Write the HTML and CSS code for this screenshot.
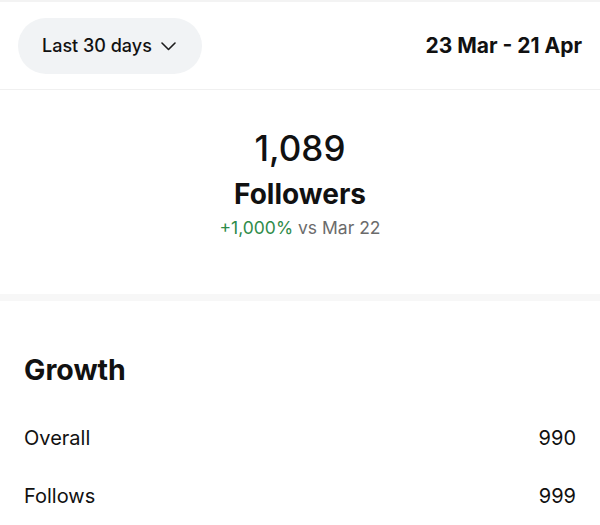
FILE: index.html
```html
<!DOCTYPE html>
<html>

<head>
	<meta charset="utf-8">
	<meta name="viewport" content="width=device-width, initial-scale=1">
	<title>Followers</title>
	<link rel="stylesheet" href="styles.css">
</head>

<body>
	<div class="header">
		<button class="range">
			Last 30 days
			<svg class="chev" width="15" height="9" viewBox="0 0 15 9">
				<path d="M1 1 L7.5 7.5 L14 1" fill="none" stroke="#1c1c1c" stroke-width="1.6" stroke-linecap="round" stroke-linejoin="round" />
			</svg>
		</button>
		<div class="dates">23 Mar - 21 Apr</div>
	</div>

	<div class="summary">
		<div class="count">1,089</div>
		<div class="label">Followers</div>
		<div class="change"><span class="up">+1,000%</span> vs Mar 22</div>
	</div>

	<div class="band"></div>

	<div class="growth">
		<h2>Growth</h2>
		<div class="row">
			<span>Overall</span>
			<span>990</span>
		</div>
		<div class="row">
			<span>Follows</span>
			<span>999</span>
		</div>
	</div>
</body>

</html>
```

FILE: styles.css
```css
body {
	margin: 0;
	background-color: white;
	color: #111;
	font-family: Inter, "Liberation Sans", sans-serif;
}

.header {
	display: flex;
	justify-content: space-between;
	align-items: center;
	height: 87px;
	padding: 0 18px;
	border-top: 2px solid #f3f3f3;
	border-bottom: 1px solid #f0f0f0;
}

.range {
	display: flex;
	align-items: center;
	gap: 9px;
	height: 56px;
	padding: 0 26px 0 24px;
	border: none;
	border-radius: 28px;
	background-color: #f1f3f5;
	color: #111;
	font-family: inherit;
	font-size: 18px;
	font-weight: 500;
}

.chev {
	margin-top: 1px;
}

.dates {
	font-size: 21px;
	font-weight: 700;
}

.summary {
	height: 204px;
	text-align: center;
}

.count {
	padding-top: 36px;
	font-size: 35px;
	font-weight: 500;
	line-height: 44px;
}

.label {
	font-size: 28px;
	font-weight: 700;
	line-height: 36px;
	margin-top: 6px;
}

.change {
	font-size: 17.5px;
	color: #6b6b6b;
	line-height: 22px;
	margin-top: 5px;
}

.up {
	color: #2e8b4a;
}

.band {
	height: 7px;
	background-color: #f7f7f7;
}

.growth {
	padding: 0 24px;
}

.growth h2 {
	margin: 51px 0 38px;
	font-size: 28.5px;
	font-weight: 700;
	line-height: 36px;
}

.row {
	display: flex;
	justify-content: space-between;
	font-size: 20px;
	line-height: 24px;
	margin-bottom: 34px;
}
```
